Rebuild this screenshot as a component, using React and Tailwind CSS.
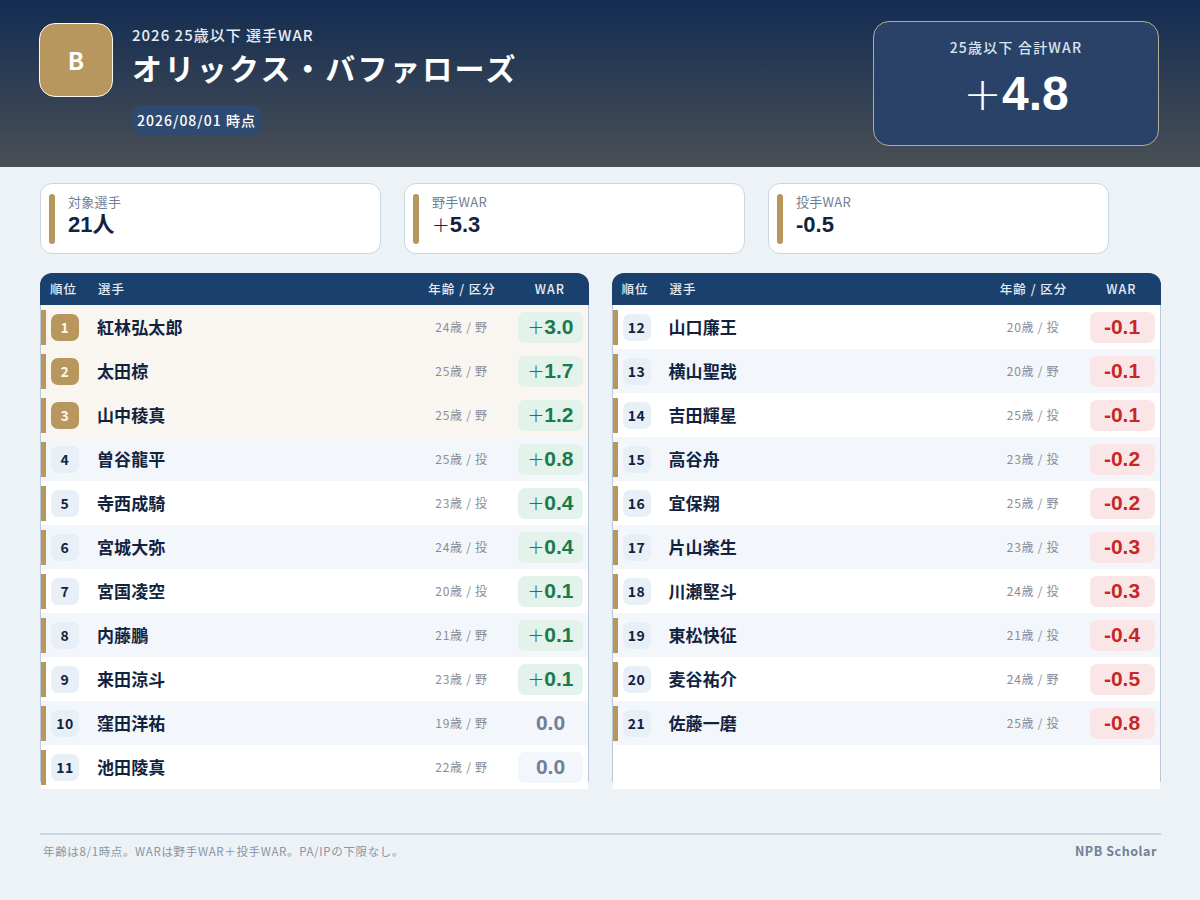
import React from 'react';

const leftRows = [
    [1, '紅林弘太郎', '24歳 / 野', '+3.0'],
    [2, '太田椋', '25歳 / 野', '+1.7'],
    [3, '山中稜真', '25歳 / 野', '+1.2'],
    [4, '曽谷龍平', '25歳 / 投', '+0.8'],
    [5, '寺西成騎', '23歳 / 投', '+0.4'],
    [6, '宮城大弥', '24歳 / 投', '+0.4'],
    [7, '宮国凌空', '20歳 / 投', '+0.1'],
    [8, '内藤鵬', '21歳 / 野', '+0.1'],
    [9, '来田涼斗', '23歳 / 野', '+0.1'],
    [10, '窪田洋祐', '19歳 / 野', '0.0'],
    [11, '池田陵真', '22歳 / 野', '0.0'],
];

const rightRows = [
    [12, '山口廉王', '20歳 / 投', '-0.1'],
    [13, '横山聖哉', '20歳 / 野', '-0.1'],
    [14, '吉田輝星', '25歳 / 投', '-0.1'],
    [15, '高谷舟', '23歳 / 投', '-0.2'],
    [16, '宜保翔', '25歳 / 野', '-0.2'],
    [17, '片山楽生', '23歳 / 投', '-0.3'],
    [18, '川瀬堅斗', '24歳 / 投', '-0.3'],
    [19, '東松快征', '21歳 / 投', '-0.4'],
    [20, '麦谷祐介', '24歳 / 野', '-0.5'],
    [21, '佐藤一磨', '25歳 / 投', '-0.8'],
];

// numbers are Arial-like, but the plus sign stays thin even on bold
const Signed = ({ value }) =>
    value[0] === '+' ? (
        <>
            <span className="font-['DejaVu_Sans'] font-extralight text-[0.96em]">+</span>
            {value.slice(1)}
        </>
    ) : (
        value
    );

const warClass = (value) => {
    if (value[0] === '+') return 'bg-[#e3f2ea] text-[#1a7a4c]';
    if (value[0] === '-') return 'bg-[#fbe6e7] text-[#c62828]';
    return 'bg-[#f3f6fa] text-[#718096]';
};

const StatCard = ({ label, value }) => (
    <div className="w-[340.5px] h-[71px] flex items-center gap-[13px] pl-[8px] bg-white border-[1.5px] border-[#c8d5e3] rounded-[12px]">
        <div className="w-[6px] h-[50px] rounded-[3px] bg-[#b8975f]"></div>
        <div className="flex flex-col -mt-[4px]">
            <span className="text-[13px] leading-[16px] tracking-[0.3px] text-[#718096]">{label}</span>
            <span className="text-[22px] leading-[30px] font-bold font-['Liberation_Sans','Noto_Sans_CJK_JP',sans-serif] text-[#12233f]"><Signed value={value} /></span>
        </div>
    </div>
);

const Row = ({ row, index }) => {
    const [rank, name, age, war] = row;
    const top = rank <= 3;
    const bg = top ? 'bg-[#f9f6f1]' : index % 2 === 1 ? 'bg-[#f3f6fa]' : 'bg-white';
    return (
        <div className={`h-[44px] flex items-center ${bg}`}>
            <div className="w-[5px] h-[35px] shrink-0 bg-[#b8975f]"></div>
            <div className={`ml-[5px] w-[28px] h-[27px] shrink-0 flex items-center justify-center rounded-[7px] text-[14px] font-bold tracking-[0.5px] ${top ? 'bg-[#b8975f] text-[#fdf6e8]' : 'bg-[#e8eff7] text-[#12233f]'}`}>
                {rank}
            </div>
            <div className="ml-[18px] flex-1 text-[17px] tracking-[0.1px] font-bold text-[#12233f]">{name}</div>
            <div className="w-[74px] text-center text-[12px] tracking-[0.7px] text-[#878e9a]">{age}</div>
            <div className={`ml-[19.5px] mr-[5px] w-[65px] h-[31px] shrink-0 flex items-center justify-center rounded-[7px] text-[21px] font-bold font-['Liberation_Sans',sans-serif] ${warClass(war)}`}>
                <Signed value={war} />
            </div>
        </div>
    );
};

const Panel = ({ rows }) => (
    <div className="w-[549px] h-[517px] shrink-0">
        <div className="h-[32px] flex items-center rounded-t-[12px] bg-[#1a416d] text-[12.5px] font-medium tracking-[1px] text-[#e6edf5]">
            <span className="ml-[10px] w-[48px]">順位</span>
            <span className="flex-1">選手</span>
            <span>年齢 / 区分</span>
            <span className="ml-[39px] mr-[24px]">WAR</span>
        </div>
        <div className="h-[477px] border-x-[1.5px] border-[#b9c9db]">
            <div className="h-[484px] bg-white">
                {rows.map((row, index) => (
                    <Row key={row[0]} row={row} index={index} />
                ))}
            </div>
        </div>
    </div>
);

export default function App() {
    return (
        <div className="w-[1200px] h-[900px] overflow-hidden bg-[#edf2f7] font-['Noto_Sans_CJK_JP','Noto_Sans',sans-serif]">
            <header className="h-[167px] flex bg-gradient-to-b from-[#122c52] to-[#4a4f54] pl-[39px] pr-[41px] pt-[21px]">
                <div className="mt-[2px] w-[74px] h-[74px] flex items-center justify-center rounded-[16px] border-[1.5px] border-[#fdf8ee] bg-[#b8975f] text-[24px] font-bold text-white">
                    B
                </div>
                <div className="ml-[19px] flex-1">
                    <div className="text-[15px] leading-[28px] font-medium tracking-[1px] text-[#e6edf5]">2026 25歳以下 選手WAR</div>
                    <div className="-mt-[3px] text-[30px] leading-[42px] font-bold tracking-[2.35px] text-white">オリックス・バファローズ</div>
                    <div className="mt-[17px] w-fit h-[30px] flex items-center px-[5px] rounded-[10px] bg-[#2f4a70] text-[14px] font-medium tracking-[1px] text-white">
                        2026/08/01 時点
                    </div>
                </div>
                <div className="w-[286px] h-[125px] flex flex-col items-center rounded-[16px] border-[1.5px] border-[#b5ab94] bg-[#2a4268]">
                    <div className="mt-[14px] text-[14px] leading-[22px] font-medium tracking-[1.2px] text-[#dbe4ee]">25歳以下 合計WAR</div>
                    <div className="mt-[5px] text-[48px] leading-[62px] font-bold font-['Liberation_Sans',sans-serif] text-white"><Signed value="+4.8" /></div>
                </div>
            </header>

            <div className="flex gap-[23.5px] pl-[40px] pt-[16px]">
                <StatCard label="対象選手" value="21人" />
                <StatCard label="野手WAR" value="+5.3" />
                <StatCard label="投手WAR" value="-0.5" />
            </div>

            <div className="flex gap-[22.5px] pl-[40px] pt-[19px]">
                <Panel rows={leftRows} />
                <Panel rows={rightRows} />
            </div>

            <footer className="ml-[40px] w-[1121px] mt-[43px] flex justify-between border-t-2 border-[#cbd6e3] pl-[3px] pr-[4px] pt-[7px]">
                <span className="text-[11.5px] leading-[18px] tracking-[0.65px] text-[#8a94a3]">年齢は8/1時点。WARは野手WAR＋投手WAR。PA/IPの下限なし。</span>
                <span className="text-[12.5px] leading-[18px] font-bold tracking-[0.55px] text-[#718096]">NPB Scholar</span>
            </footer>
        </div>
    );
}
